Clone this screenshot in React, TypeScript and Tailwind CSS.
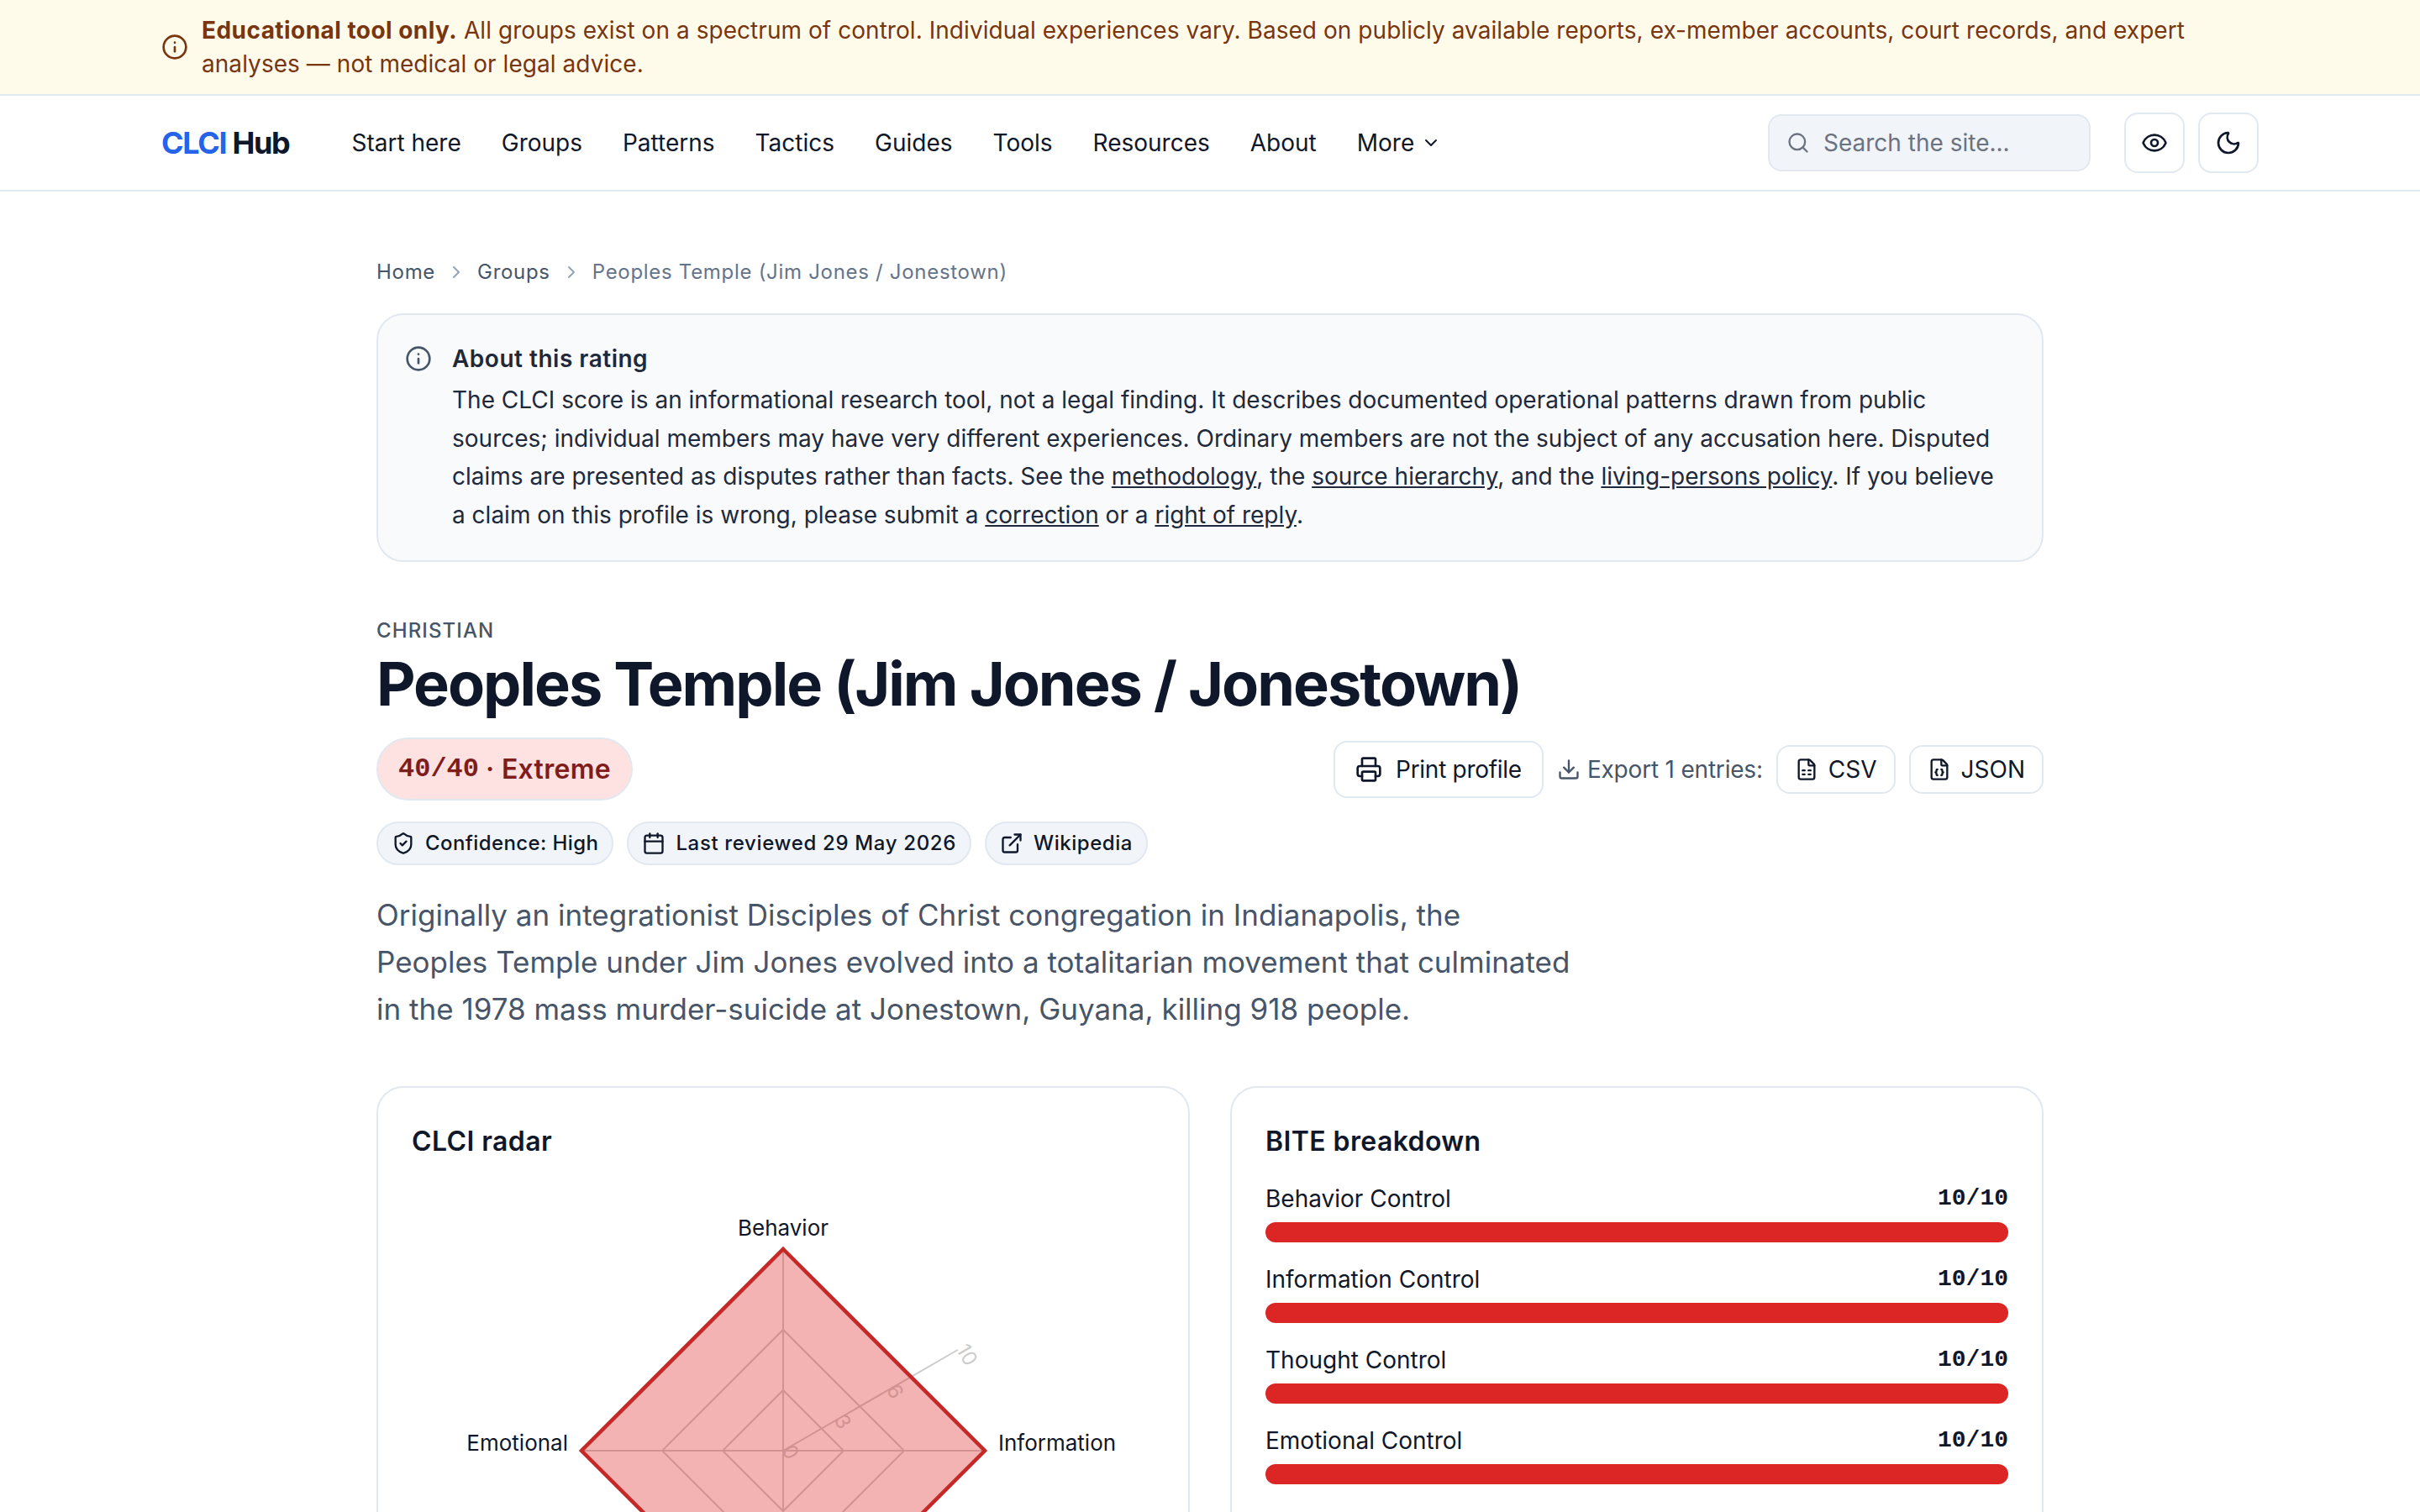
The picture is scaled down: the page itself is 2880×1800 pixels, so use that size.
import { Info, Search, ChevronDown, Eye, Moon, ChevronRight, ShieldCheck, Calendar, ExternalLink, Printer, Download, FileSpreadsheet, FileJson } from "lucide-react";

const nav = ["Start here", "Groups", "Patterns", "Tactics", "Guides", "Tools", "Resources", "About"];
const bite = ["Behavior Control", "Information Control", "Thought Control", "Emotional Control"];

function Radar() {
  const cx = 442;
  const cy = 320;
  const diamond = (r: number) => `${cx},${cy - r} ${cx + r},${cy} ${cx},${cy + r} ${cx - r},${cy}`;
  const ticks = [
    { v: "0", r: 0 },
    { v: "3", r: 72 },
    { v: "6", r: 144 },
    { v: "10", r: 240 },
  ];
  return (
    <svg width="884" height="640" viewBox="0 0 884 640" className="block">
      {[72, 144, 240].map((r) => (
        <polygon key={r} points={diamond(r)} fill="none" stroke="#ccc" strokeWidth="2" />
      ))}
      <line x1={cx} y1={cy - 240} x2={cx} y2={cy + 240} stroke="#ccc" strokeWidth="2" />
      <line x1={cx - 240} y1={cy} x2={cx + 240} y2={cy} stroke="#ccc" strokeWidth="2" />
      <line x1={cx} y1={cy} x2={cx + 207.8} y2={cy - 120} stroke="#ccc" strokeWidth="2" />
      {ticks.map((t) => {
        const x = cx + t.r * 0.866 + 5;
        const y = cy - t.r * 0.5 - 5;
        return (
          <text key={t.v} x={x} y={y} transform={`rotate(60 ${x} ${y})`} fontSize="24" fill="#ccc" textAnchor="start" dominantBaseline="central">
            {t.v}
          </text>
        );
      })}
      <polygon points={diamond(240)} fill="#dc2626" fillOpacity="0.35" stroke="#c62828" strokeWidth="4.5" />
      <text x={cx} y={64} fontSize="26" fill="#0f172a" textAnchor="middle">Behavior</text>
      <text x={698} y={320} fontSize="26" fill="#0f172a" textAnchor="start">Information</text>
      <text x={186} y={320} fontSize="26" fill="#0f172a" textAnchor="end">Emotional</text>
    </svg>
  );
}

export default function App() {
  return (
    <div className="h-[1800px] overflow-hidden bg-white font-['Inter',sans-serif] text-[#0f172a]">
      <div className="border-b-2 border-[#e2e8f0] bg-[#fffbeb] py-4 text-[#78350f]">
        <div className="mx-auto flex w-[2560px] items-center gap-4 px-8 text-[28px] leading-[40px] tracking-[0.05px]">
          <Info className="h-8 w-8 shrink-0" strokeWidth={2} />
          <p>
            <strong className="font-bold tracking-[0.45px]">Educational tool only.</strong> All groups exist on a spectrum of control. Individual experiences vary. Based on publicly available reports, ex-member accounts, court records, and expert analyses — not medical or legal advice.
          </p>
        </div>
      </div>

      <header className="border-b-2 border-[#e2e8f0] bg-white">
        <div className="mx-auto flex h-[112px] w-[2560px] items-center px-8">
          <div className="text-[36px] font-bold tracking-[-1.35px]">
            <span className="text-[#2563eb]">CLCI</span> Hub
          </div>
          <nav className="ml-[50px] flex items-center text-[28px]">
            {nav.map((n) => (
              <a key={n} className="px-6">{n}</a>
            ))}
            <a className="flex items-center gap-2 px-6">
              More <ChevronDown className="h-6 w-6" strokeWidth={2} />
            </a>
          </nav>
          <div className="ml-auto flex items-center gap-4">
            <div className="mr-6 flex h-[68px] w-[384px] items-center gap-4 rounded-2xl border-2 border-[#e2e8f0] bg-[#f1f5f9] px-5 text-[28px] text-[#6b7280]">
              <Search className="h-7 w-7" strokeWidth={2} />
              <span>Search the site...</span>
            </div>
            <button className="flex h-[72px] w-[72px] items-center justify-center rounded-2xl border-2 border-[#e2e8f0] bg-white">
              <Eye className="h-8 w-8" strokeWidth={2} />
            </button>
            <button className="flex h-[72px] w-[72px] items-center justify-center rounded-2xl border-2 border-[#e2e8f0] bg-white">
              <Moon className="h-8 w-8" strokeWidth={2} />
            </button>
          </div>
        </div>
      </header>

      <main className="mx-auto w-[2048px] px-8 pt-[80px]">
        <nav className="flex h-[32px] items-center gap-[13px] text-[24px] tracking-[0.7px] text-[#475569]">
          <span>Home</span>
          <ChevronRight className="h-6 w-6 text-[#94a3b8]" strokeWidth={2} />
          <span>Groups</span>
          <ChevronRight className="h-6 w-6 text-[#94a3b8]" strokeWidth={2} />
          <span className="text-[#64748b]">Peoples Temple (Jim Jones / Jonestown)</span>
        </nav>

        <section className="mt-[33px] flex gap-6 rounded-[32px] border-2 border-[#e2e8f0] bg-[#f8fafc] px-8 pb-[31px] pt-8">
          <Info className="mt-1 h-8 w-8 shrink-0 text-[#475569]" strokeWidth={2} />
          <div className="pr-3">
            <h2 className="text-[28px] font-semibold leading-[40px] tracking-[0.5px] text-[#1e293b]">About this rating</h2>
            <p className="mt-[7px] text-[28px] leading-[45.5px] text-[#1e293b]">
              The CLCI score is an informational research tool, not a legal finding. It describes documented operational patterns drawn from public sources; individual members may have very different experiences. Ordinary members are not the subject of any accusation here. Disputed claims are presented as disputes rather than facts. See the <a className="underline">methodology</a>, the <a className="underline">source hierarchy</a>, and the <a className="underline">living-persons policy</a>. If you believe a claim on this profile is wrong, please submit a <a className="underline">correction</a> or a <a className="underline">right of reply</a>.
            </p>
          </div>
        </section>

        <div className="mt-[66px] text-[24px] font-medium uppercase leading-[32px] tracking-[1.1px] text-[#475569]">Christian</div>
        <h1 className="mt-[7px] text-[72px] font-bold leading-[80px] tracking-[-2px]">Peoples Temple (Jim Jones / Jonestown)</h1>

        <div className="mt-6 flex items-center justify-between">
          <div className="flex h-[75px] items-center gap-2 rounded-full border-2 border-[#e2e8f0] bg-[#fee2e2] px-6 text-[#7f1d1d]">
            <span className="font-['Liberation_Mono',monospace] text-[32px] font-bold">40/40</span>
            <span className="text-[32px] font-semibold tracking-[0.3px]">· Extreme</span>
          </div>
          <div className="flex items-center">
            <button className="flex h-[68px] items-center gap-4 rounded-2xl border-2 border-[#e2e8f0] bg-white px-6 text-[28px] tracking-[-0.28px]">
              <Printer className="h-8 w-8" strokeWidth={2} /> Print profile
            </button>
            <span className="ml-4 flex items-center gap-2 text-[28px] tracking-[-0.2px] text-[#475569]">
              <Download className="h-7 w-7" strokeWidth={2} /> Export 1 entries:
            </span>
            <button className="ml-4 flex h-[58px] items-center gap-3 rounded-2xl border-2 border-[#e2e8f0] bg-white px-5 text-[28px]">
              <FileSpreadsheet className="h-7 w-7" strokeWidth={2} /> CSV
            </button>
            <button className="ml-4 flex h-[58px] items-center gap-3 rounded-2xl border-2 border-[#e2e8f0] bg-white px-5 text-[28px]">
              <FileJson className="h-7 w-7" strokeWidth={2} /> JSON
            </button>
          </div>
        </div>

        <div className="mt-[25px] flex gap-4 text-[24px] font-medium">
          <span className="flex h-[52px] items-center gap-3 rounded-full border-2 border-[#e2e8f0] bg-[#f1f5f9] px-4 tracking-[0.4px]">
            <ShieldCheck className="h-7 w-7" strokeWidth={2} /> Confidence: High
          </span>
          <span className="flex h-[52px] items-center gap-3 rounded-full border-2 border-[#e2e8f0] bg-[#f1f5f9] px-4 tracking-[0.65px]">
            <Calendar className="h-7 w-7" strokeWidth={2} /> Last reviewed 29 May 2026
          </span>
          <span className="flex h-[52px] items-center gap-3 rounded-full border-2 border-[#e2e8f0] bg-[#f1f5f9] px-4 tracking-[0.55px]">
            <ExternalLink className="h-7 w-7" strokeWidth={2} /> Wikipedia
          </span>
        </div>

        <p className="mt-[31px] w-[1430px] text-[35px] leading-[56px] text-[#475569]">
          Originally an integrationist Disciples of Christ congregation in Indianapolis, the Peoples Temple under Jim Jones evolved into a totalitarian movement that culminated in the 1978 mass murder-suicide at Jonestown, Guyana, killing 918 people.
        </p>

        <div className="mt-[64px] grid grid-cols-2 gap-12">
          <section className="rounded-[32px] border-2 border-[#e2e8f0] bg-white p-10">
            <h3 className="text-[32px] font-semibold leading-[48px] tracking-[0.4px]">CLCI radar</h3>
            <div className="mt-6"><Radar /></div>
          </section>
          <section className="rounded-[32px] border-2 border-[#e2e8f0] bg-white p-10">
            <h3 className="text-[32px] font-semibold leading-[48px] tracking-[0.4px]">BITE breakdown</h3>
            <div className="mt-6 flex flex-col gap-6">
              {bite.map((b) => (
                <div key={b}>
                  <div className="mb-2 flex items-center justify-between text-[28px] leading-[40px]">
                    <span>{b}</span>
                    <span className="font-['Liberation_Mono',monospace] font-bold">10/10</span>
                  </div>
                  <div className="h-6 rounded-full bg-[#dc2626]" />
                </div>
              ))}
            </div>
          </section>
        </div>
      </main>
    </div>
  );
}
